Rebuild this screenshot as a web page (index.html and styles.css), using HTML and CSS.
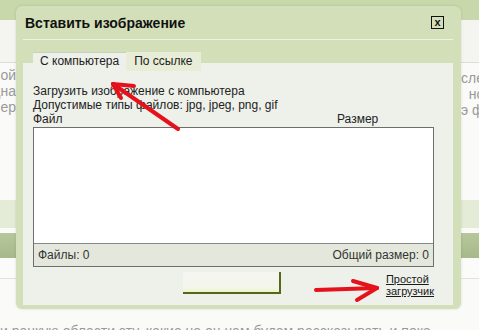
FILE: index.html
```html
<!DOCTYPE html>
<html>
<head>
    <title>Вставить изображение</title>
    <link rel="stylesheet" href="styles.css">
</head>
<body>
    <div class="page">
        <div class="topbar"></div>
        <div class="pagehead"></div>
        <div class="pagebody">
            <div class="side side-left">лой<br>дна<br>ер</div>
            <div class="side side-right">сле<br>&nbsp;&nbsp;но<br>э ф</div>
        </div>
        <div class="band-light"></div>
        <div class="band-dark"></div>
        <div class="pagefoot"></div>
        <p class="pagetext">и ранкую области эту, какие не он нам будем рассказывать и пока</p>

        <div class="dialog">
            <div class="dialog-head">
                <span class="dialog-title">Вставить изображение</span>
                <span class="dialog-close">x</span>
            </div>
            <div class="tabs">
                <div class="tab tab-active">С компьютера</div>
                <div class="tab">По ссылке</div>
            </div>
            <div class="panel">
                <div class="note">Загрузить изображение с компьютера</div>
                <div class="note">Допустимые типы файлов: jpg, jpeg, png, gif</div>
                <div class="list-head">
                    <span>Файл</span>
                    <span class="col-size">Размер</span>
                </div>
                <div class="list">
                    <div class="list-body"></div>
                    <div class="list-foot">
                        <span>Файлы: 0</span>
                        <span>Общий размер: 0</span>
                    </div>
                </div>
                <div class="actions">
                    <div class="upload-btn"></div>
                    <a class="simple-link" href="#">Простой<br>загрузчик</a>
                </div>
            </div>
        </div>

        <svg class="marks" width="479" height="330" viewBox="0 0 479 330">
            <g fill="none" stroke="#e5121b" stroke-width="4" stroke-linecap="round" stroke-linejoin="round">
                <path d="M178 129 L113 84"/>
                <path d="M113 84 L121 98"/>
                <path d="M113 84 L134 86"/>
                <path d="M316 290 L377 288"/>
                <path d="M377 288 L353 281"/>
                <path d="M377 288 L357 300"/>
            </g>
        </svg>
    </div>
</body>
</html>
```

FILE: styles.css
```css
body {
    margin: 0;
    font-family: "Liberation Sans", Arial, sans-serif;
    background-color: #fafaf8;
    color: #222;
}
.page {
    position: relative;
    width: 479px;
    height: 330px;
    overflow: hidden;
}
.topbar {
    height: 20px;
    background-color: #c9d8ab;
}
.pagehead {
    height: 42px;
    background-color: #f4f5f1;
    border-bottom: 1px solid #dcdfd6;
}
.pagebody {
    height: 137px;
    display: flex;
    justify-content: space-between;
    padding-top: 4px;
    box-sizing: border-box;
}
.side {
    font-size: 14px;
    line-height: 16px;
    color: #9a9a9a;
    white-space: nowrap;
}
.side-left {
    width: 16px;
    text-align: right;
    direction: rtl;
}
.side-right {
    width: 18px;
    padding-top: 3px;
    margin-left: -2px;
}
.band-light {
    height: 28px;
    background-color: #e4ebd6;
    margin-bottom: 5px;
}
.band-dark {
    height: 25px;
    background: linear-gradient(#b6c79c, #a7b98a);
}
.pagefoot {
    height: 20px;
    border-bottom: 1px solid #e2e2e2;
    background-color: #fbfbfa;
}
.pagetext {
    margin: 44px 0 0 0;
    font-size: 14px;
    color: #9a9a9a;
    white-space: nowrap;
}

.dialog {
    position: absolute;
    left: 16px;
    top: 6px;
    width: 445px;
    height: 303px;
    box-sizing: border-box;
    background-color: #d3dfb8;
    border-radius: 6px;
    padding: 0 8px 4px 7px;
    display: flex;
    flex-direction: column;
    box-shadow: 0 0 3px rgba(0,0,0,0.12);
}
.dialog-head {
    height: 33px;
    display: flex;
    align-items: center;
    justify-content: space-between;
    padding: 0 9px 0 2px;
    border-bottom: 1px solid #edf3e0;
}
.dialog-title {
    font-size: 14px;
    font-weight: bold;
    color: #111;
}
.dialog-close {
    width: 11px;
    height: 11px;
    border: 1px solid #111;
    font-size: 11px;
    line-height: 10px;
    font-weight: bold;
    text-align: center;
    color: #111;
}
.tabs {
    display: flex;
    height: 19px;
    margin: 12px 0 -8px 0;
    padding-left: 10px;
    position: relative;
    font-size: 12px;
}
.tab {
    padding: 0 8px;
    line-height: 18px;
    background-color: #e7edd6;
    color: #222;
}
.tab-active {
    padding: 0 7px;
    background-color: #eef0ea;
    border-top: 1px solid #c8cfbc;
    line-height: 17px;
}
.panel {
    flex: 1;
    background-color: #eef0ea;
    padding: 21px 19px 0 10px;
    font-size: 12px;
}
.note {
    line-height: 14px;
}
.list-head {
    display: flex;
    justify-content: space-between;
    line-height: 14px;
    margin-bottom: 1px;
}
.col-size {
    width: 97px;
}
.list {
    border: 1px solid #6e6e6e;
}
.list-body {
    height: 115px;
    background-color: #fff;
}
.list-foot {
    height: 22px;
    border-top: 1px solid #8a8a8a;
    background-color: #e4e8dc;
    display: flex;
    align-items: center;
    justify-content: space-between;
    padding: 0 4px;
    color: #333;
}
.actions {
    display: flex;
    align-items: flex-start;
    padding-top: 5px;
}
.upload-btn {
    width: 96px;
    height: 20px;
    margin-left: 150px;
    background: linear-gradient(#f5f6f2, #f3f5ea 80%, #eef5c9);
    border-right: 2px solid #56661c;
    border-bottom: 2px solid #56661c;
}
.simple-link {
    margin-left: auto;
    margin-top: 1px;
    font-size: 11px;
    line-height: 12px;
    color: #1a1a1a;
    text-decoration: underline;
}
.marks {
    position: absolute;
    left: 0;
    top: 0;
}
```
